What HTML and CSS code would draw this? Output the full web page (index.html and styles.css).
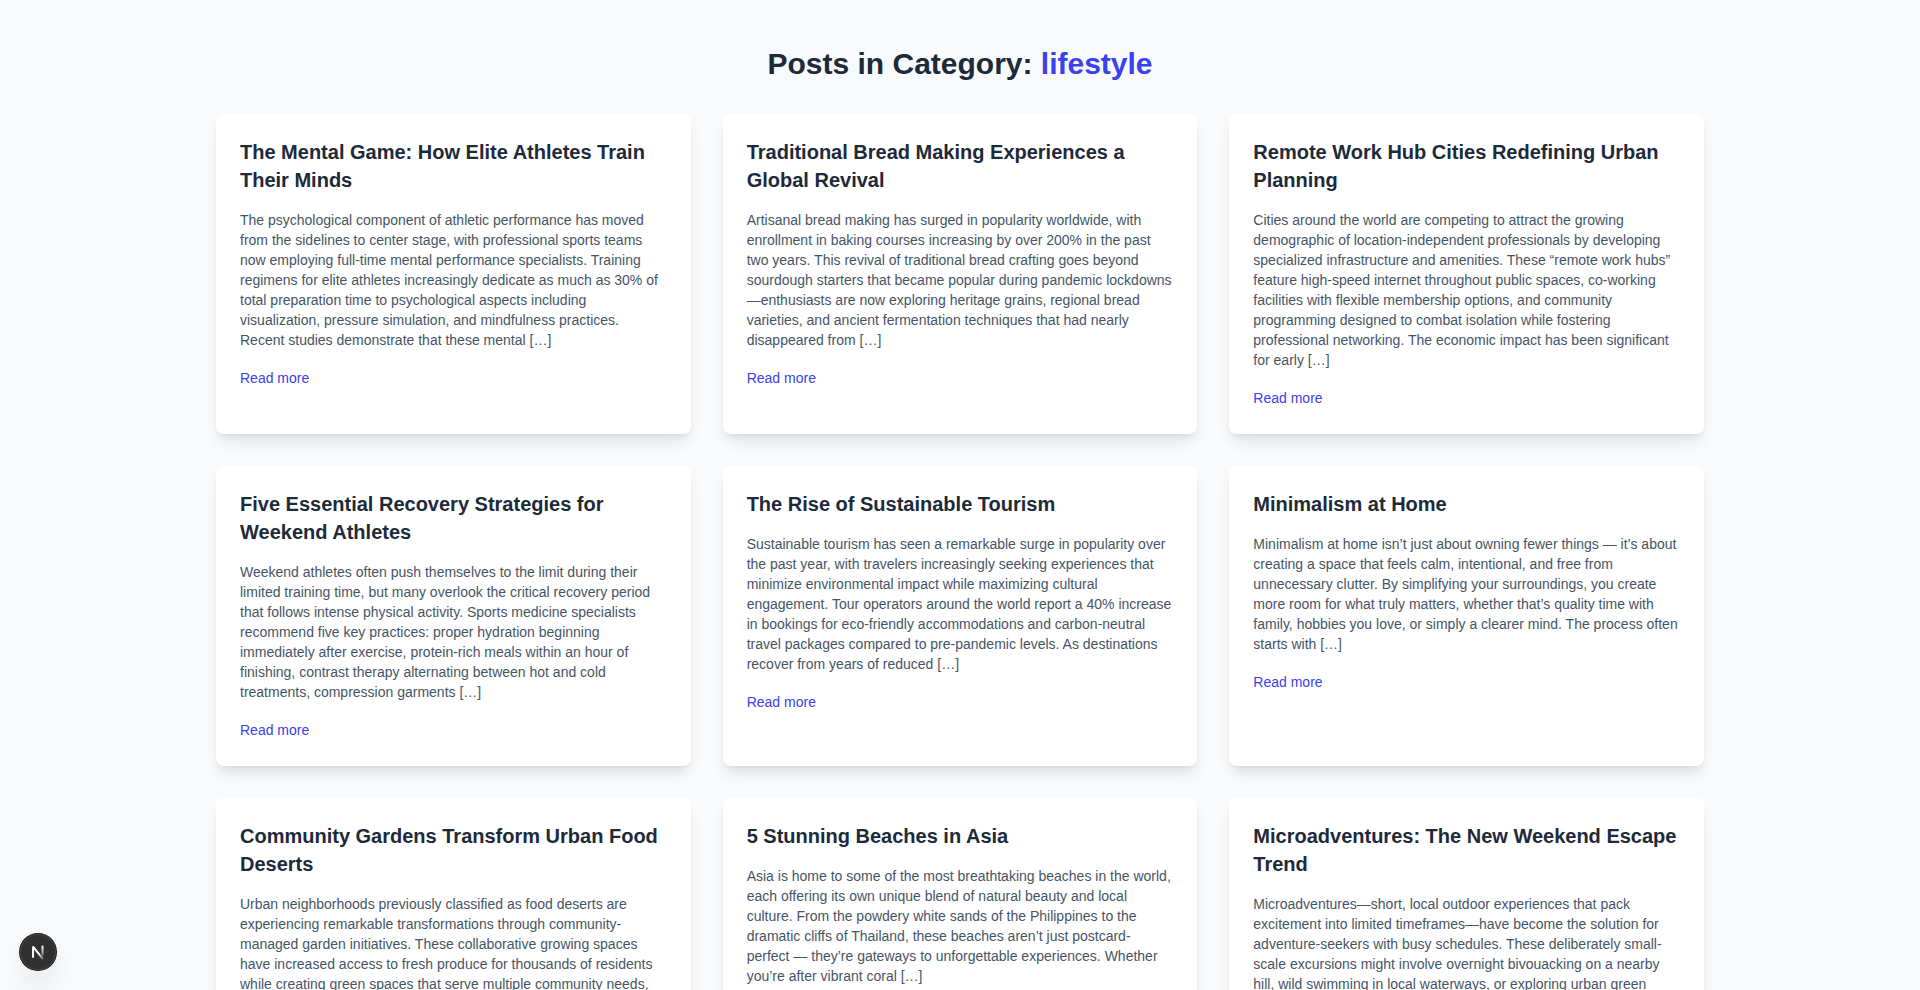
FILE: index.html
```html
<!DOCTYPE html>
<html lang="en">
<head>
<meta charset="utf-8">
<meta name="viewport" content="width=device-width, initial-scale=1">
<title>Posts in Category: lifestyle</title>
<link rel="stylesheet" href="styles.css">
</head>
<body>
<main class="page">
  <h1 class="page-title">Posts in Category: <span class="category">lifestyle</span></h1>
  <div class="posts">
    <article class="card">
      <h2 class="card-title">The Mental Game: How Elite Athletes Train Their Minds</h2>
      <p class="excerpt">The psychological component of athletic performance has moved from the sidelines to center stage, with professional sports teams now employing full-time mental performance specialists. Training regimens for elite athletes increasingly dedicate as much as 30% of total preparation time to psychological aspects including visualization, pressure simulation, and mindfulness practices. Recent studies demonstrate that these mental […]</p>
      <a class="more" href="#">Read more</a>
    </article>
    <article class="card">
      <h2 class="card-title">Traditional Bread Making Experiences a Global Revival</h2>
      <p class="excerpt">Artisanal bread making has surged in popularity worldwide, with enrollment in baking courses increasing by over 200% in the past two years. This revival of traditional bread crafting goes beyond sourdough starters that became popular during pandemic lockdowns—enthusiasts are now exploring heritage grains, regional bread varieties, and ancient fermentation techniques that had nearly disappeared from […]</p>
      <a class="more" href="#">Read more</a>
    </article>
    <article class="card">
      <h2 class="card-title">Remote Work Hub Cities Redefining Urban Planning</h2>
      <p class="excerpt">Cities around the world are competing to attract the growing demographic of location-independent professionals by developing specialized infrastructure and amenities. These “remote work hubs” feature high-speed internet throughout public spaces, co-working facilities with flexible membership options, and community programming designed to combat isolation while fostering professional networking. The economic impact has been significant for early […]</p>
      <a class="more" href="#">Read more</a>
    </article>
    <article class="card">
      <h2 class="card-title">Five Essential Recovery Strategies for Weekend Athletes</h2>
      <p class="excerpt">Weekend athletes often push themselves to the limit during their limited training time, but many overlook the critical recovery period that follows intense physical activity. Sports medicine specialists recommend five key practices: proper hydration beginning immediately after exercise, protein-rich meals within an hour of finishing, contrast therapy alternating between hot and cold treatments, compression garments […]</p>
      <a class="more" href="#">Read more</a>
    </article>
    <article class="card">
      <h2 class="card-title">The Rise of Sustainable Tourism</h2>
      <p class="excerpt">Sustainable tourism has seen a remarkable surge in popularity over the past year, with travelers increasingly seeking experiences that minimize environmental impact while maximizing cultural engagement. Tour operators around the world report a 40% increase in bookings for eco-friendly accommodations and carbon-neutral travel packages compared to pre-pandemic levels. As destinations recover from years of reduced […]</p>
      <a class="more" href="#">Read more</a>
    </article>
    <article class="card">
      <h2 class="card-title">Minimalism at Home</h2>
      <p class="excerpt">Minimalism at home isn’t just about owning fewer things — it’s about creating a space that feels calm, intentional, and free from unnecessary clutter. By simplifying your surroundings, you create more room for what truly matters, whether that’s quality time with family, hobbies you love, or simply a clearer mind. The process often starts with […]</p>
      <a class="more" href="#">Read more</a>
    </article>
    <article class="card">
      <h2 class="card-title">Community Gardens Transform Urban Food Deserts</h2>
      <p class="excerpt">Urban neighborhoods previously classified as food deserts are experiencing remarkable transformations through community-managed garden initiatives. These collaborative growing spaces have increased access to fresh produce for thousands of residents while creating green spaces that serve multiple community needs, […]</p>
      <a class="more" href="#">Read more</a>
    </article>
    <article class="card">
      <h2 class="card-title">5 Stunning Beaches in Asia</h2>
      <p class="excerpt">Asia is home to some of the most breathtaking beaches in the world, each offering its own unique blend of natural beauty and local culture. From the powdery white sands of the Philippines to the dramatic cliffs of Thailand, these beaches aren’t just postcard-perfect — they’re gateways to unforgettable experiences. Whether you’re after vibrant coral […]</p>
      <a class="more" href="#">Read more</a>
    </article>
    <article class="card">
      <h2 class="card-title">Microadventures: The New Weekend Escape Trend</h2>
      <p class="excerpt">Microadventures—short, local outdoor experiences that pack excitement into limited timeframes—have become the solution for adventure-seekers with busy schedules. These deliberately small-scale excursions might involve overnight bivouacking on a nearby hill, wild swimming in local waterways, or exploring urban green landscapes […]</p>
      <a class="more" href="#">Read more</a>
    </article>
  </div>
</main>
<button class="dev-button" type="button" aria-label="Open Next.js Dev Tools">
  <svg class="dev-logo" viewBox="0 0 40 40" fill="none" aria-hidden="true">
    <defs>
      <linearGradient id="stem" x1="0" y1="13" x2="0" y2="26" gradientUnits="userSpaceOnUse">
        <stop stop-color="#fff"/>
        <stop offset=".6" stop-color="#fff" stop-opacity=".6"/>
        <stop offset="1" stop-color="#fff" stop-opacity="0"/>
      </linearGradient>
      <linearGradient id="diagonal" x1="21" y1="22" x2="27" y2="29" gradientUnits="userSpaceOnUse">
        <stop stop-color="#fff"/>
        <stop offset="1" stop-color="#fff" stop-opacity=".1"/>
      </linearGradient>
    </defs>
    <path d="M14.5 26.5V14L25.5 28" stroke="url(#diagonal)" stroke-width="2.2" stroke-linejoin="bevel"/>
    <path d="M25 13V25" stroke="url(#stem)" stroke-width="2.2"/>
  </svg>
</button>
</body>
</html>
```
FILE: styles.css
```css
* {
  box-sizing: border-box;
}

body {
  margin: 0;
  background: #f9fafc;
  color: #1c2a3a;
  font-family: "Liberation Sans", Arial, Helvetica, sans-serif;
  font-size: 16px;
  line-height: 24px;
}

.page {
  max-width: 1536px;
  margin: 0 auto;
  padding: 46px 24px;
}

.page-title {
  margin: 0 0 32px;
  font-size: 30px;
  line-height: 36px;
  text-align: center;
}

.category {
  color: #3a41f0;
}

.posts {
  display: grid;
  grid-template-columns: repeat(auto-fit, minmax(400px, 1fr));
  gap: 32px;
}

.card {
  padding: 24px;
  border-radius: 8px;
  background: #fff;
  box-shadow: 0 10px 15px -3px rgb(0 0 0 / 10%), 0 4px 6px -4px rgb(0 0 0 / 10%);
}

.card-title {
  margin: 0 0 16px;
  font-size: 20px;
  line-height: 28px;
}

.excerpt {
  margin: 0 0 16px;
  color: #465565;
  font-size: 14px;
  line-height: 20px;
}

.more {
  color: #3a41f0;
  font-size: 14px;
  text-decoration: none;
}

.more:hover {
  text-decoration: underline;
}

.dev-button {
  position: fixed;
  bottom: 20px;
  left: 20px;
  width: 36px;
  height: 36px;
  padding: 0;
  border: 0;
  border-radius: 50%;
  background: #303030;
  box-shadow: 0 0 0 1px #171717, inset 0 0 0 1px #464646, 0 16px 32px -8px rgb(0 0 0 / 24%);
  cursor: pointer;
}

.dev-logo {
  display: block;
  width: 36px;
  height: 36px;
}
```
